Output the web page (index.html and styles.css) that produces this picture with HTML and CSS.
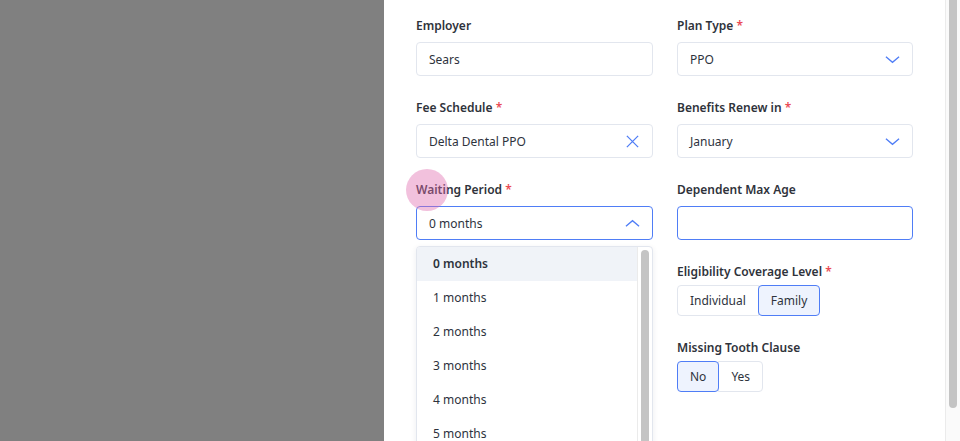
FILE: index.html
```html
<!DOCTYPE html>
<html lang="en">
<head>
  <meta charset="UTF-8">
  <meta name="viewport" content="width=device-width, initial-scale=1.0">
  <title>Edit Plan</title>
  <link rel="stylesheet" href="styles.css">
</head>
<body>
  <div class="backdrop"></div>

  <aside class="drawer">
    <form class="plan-form">
      <div class="field">
        <label class="field-label">Employer</label>
        <div class="control"><span class="value">Sears</span></div>
      </div>
      <div class="field">
        <label class="field-label">Plan Type <span class="req">*</span></label>
        <div class="control">
          <span class="value">PPO</span>
          <svg class="icon" viewBox="0 0 16 16"><path d="M1 5l7 6 7-6"/></svg>
        </div>
      </div>

      <div class="field">
        <label class="field-label">Fee Schedule <span class="req">*</span></label>
        <div class="control">
          <span class="value">Delta Dental PPO</span>
          <svg class="icon" viewBox="0 0 16 16"><path d="M2 2l12 12M14 2L2 14"/></svg>
        </div>
      </div>
      <div class="field">
        <label class="field-label">Benefits Renew in <span class="req">*</span></label>
        <div class="control">
          <span class="value">January</span>
          <svg class="icon" viewBox="0 0 16 16"><path d="M1 5l7 6 7-6"/></svg>
        </div>
      </div>

      <div class="field field-open">
        <span class="tap"></span>
        <label class="field-label">Waiting Period <span class="req">*</span></label>
        <div class="control focused">
          <span class="value">0 months</span>
          <svg class="icon" viewBox="0 0 16 16"><path d="M1 11l7-6 7 6"/></svg>
        </div>
        <div class="menu">
          <ul class="menu-list">
            <li class="menu-item active">0 months</li>
            <li class="menu-item">1 months</li>
            <li class="menu-item">2 months</li>
            <li class="menu-item">3 months</li>
            <li class="menu-item">4 months</li>
            <li class="menu-item">5 months</li>
          </ul>
          <div class="rail"><div class="thumb"></div></div>
        </div>
      </div>
      <div class="field">
        <label class="field-label">Dependent Max Age</label>
        <div class="control focused"></div>
      </div>

      <div class="field">
        <label class="field-label">Deductible Applies</label>
        <div class="segmented">
          <button type="button" class="seg selected">Yes</button>
          <button type="button" class="seg">No</button>
        </div>
      </div>
      <div class="field">
        <label class="field-label">Eligibility Coverage Level <span class="req">*</span></label>
        <div class="segmented">
          <button type="button" class="seg">Individual</button>
          <button type="button" class="seg selected">Family</button>
        </div>
      </div>

      <div class="field">
        <label class="field-label">Lifetime Max</label>
        <div class="control"></div>
      </div>
      <div class="field">
        <label class="field-label">Missing Tooth Clause</label>
        <div class="segmented">
          <button type="button" class="seg selected">No</button>
          <button type="button" class="seg">Yes</button>
        </div>
      </div>
    </form>
  </aside>

  <div class="page-rail"><div class="page-thumb"></div></div>
</body>
</html>
```

FILE: styles.css
```css
html, body {
  margin: 0;
  height: 100%;
}
body {
  display: flex;
  font-family: "Noto Sans", "Open Sans", sans-serif;
  font-size: 12px;
  color: #2c313c;
  overflow: hidden;
}
.backdrop {
  width: 384px;
  flex: none;
  background-color: #808080;
}
.drawer {
  flex: 1;
  background-color: #ffffff;
  overflow: hidden;
}
.page-rail {
  width: 14px;
  flex: none;
  background-color: #fafafa;
  border-left: 1px solid #ebebeb;
}
.page-thumb {
  width: 8px;
  height: 408px;
  margin-left: 3px;
  background-color: #c4c4c4;
  border-radius: 0 0 5px 5px;
}
.plan-form {
  display: grid;
  grid-template-columns: 237px 236px;
  column-gap: 24px;
  row-gap: 23px;
  padding: 17px 32px 0;
  align-items: start;
}
.field {
  position: relative;
  display: flex;
  flex-direction: column;
}
.field-label {
  font-weight: 600;
  line-height: 18px;
  margin-bottom: 7px;
  color: #2f333b;
}
.req {
  color: #ea4b55;
}
.control {
  height: 34px;
  box-sizing: border-box;
  border: 1px solid #e2e6ee;
  border-radius: 4px;
  display: flex;
  align-items: center;
  justify-content: space-between;
  padding: 0 12px;
}
.control.focused {
  border-color: #4f7df6;
}
.value {
  color: #2e333d;
}
.icon {
  width: 15px;
  height: 15px;
  fill: none;
  stroke: #4f7df6;
  stroke-width: 1.4;
}
.segmented {
  display: flex;
  margin-top: -3px;
}
.seg {
  height: 31px;
  padding: 0 12px;
  font: inherit;
  color: #2e333d;
  background-color: #ffffff;
  border: 1px solid #e2e6ee;
  margin: 0;
}
.seg:first-child {
  border-radius: 4px 0 0 4px;
}
.seg:last-child {
  border-radius: 0 4px 4px 0;
}
.seg + .seg {
  margin-left: -1px;
}
.seg.selected {
  position: relative;
  background-color: #eef3fe;
  border-color: #4f7df6;
  border-radius: 4px;
}

/* open select */
.tap {
  position: absolute;
  left: -10px;
  top: -12px;
  width: 42px;
  height: 42px;
  border-radius: 50%;
  background-color: rgba(224, 108, 174, 0.42);
  z-index: 3;
}
.menu {
  position: absolute;
  top: 65px;
  left: 0;
  right: 0;
  z-index: 2;
  display: flex;
  height: 230px;
  background-color: #ffffff;
  border: 1px solid #e2e6ee;
  border-radius: 4px;
  box-shadow: 0 2px 6px rgba(30, 40, 60, 0.08);
  overflow: hidden;
}
.menu-list {
  flex: 1;
  margin: 0;
  padding: 0;
  list-style: none;
}
.menu-item {
  height: 34px;
  line-height: 34px;
  padding: 0 16px;
  color: #2e333d;
}
.menu-item.active {
  background-color: #f0f3f8;
  font-weight: 600;
}
.rail {
  width: 14px;
  flex: none;
  border-left: 1px solid #ebebeb;
}
.thumb {
  width: 8px;
  height: 260px;
  margin: 3px 0 0 3px;
  background-color: #c4c4c4;
  border-radius: 4px;
}
```
